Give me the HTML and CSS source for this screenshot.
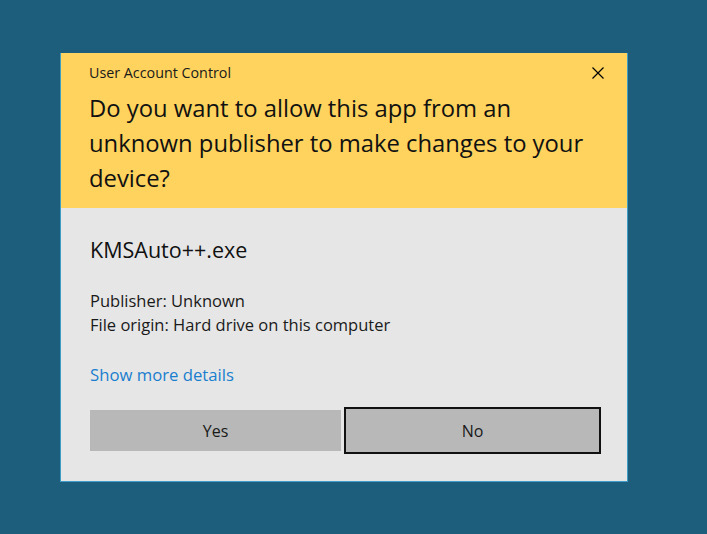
FILE: index.html
```html
<!DOCTYPE html>
<html lang="en">
<head>
<meta charset="utf-8">
<title>User Account Control</title>
<link rel="stylesheet" href="styles.css">
</head>
<body>
<div class="dialog">
  <div class="header">
    <div class="topbar">
      <div class="caption">User Account Control</div>
      <div class="close" aria-label="Close">
        <svg width="12" height="12" viewBox="0 0 12 12"><path d="M0.5 0.5 L11.5 11.5 M11.5 0.5 L0.5 11.5" stroke="#000" stroke-width="1.2" fill="none"/></svg>
      </div>
    </div>
    <div class="question">Do you want to allow this app from an unknown publisher to make changes to your device?</div>
  </div>
  <div class="content">
    <div class="appname">KMSAuto++.exe</div>
    <div class="info">
      <div>Publisher: Unknown</div>
      <div>File origin: Hard drive on this computer</div>
    </div>
    <div class="link">Show more details</div>
    <div class="buttons">
      <div class="btn">Yes</div>
      <div class="btn focused">No</div>
    </div>
  </div>
</div>
</body>
</html>
```

FILE: styles.css
```css
html, body {
  margin: 0;
  padding: 0;
}
body {
  background: #1d5e7d;
  width: 707px;
  height: 534px;
  overflow: hidden;
  font-family: "Open Sans", "Noto Sans", sans-serif;
  color: #000;
}
.dialog {
  margin-left: 60px;
  margin-top: 53px;
  width: 568px;
  box-sizing: border-box;
  border: 1px solid #3f9cc4;
  border-top: none;
  background: #e6e6e6;
}
.header {
  background: #ffd35d;
  padding: 10px 20px 12px 28px;
}
.topbar {
  display: flex;
  justify-content: space-between;
  align-items: center;
  height: 20px;
}
.caption {
  font-size: 14.3px;
  line-height: 20px;
  color: #1a1a1a;
}
.close {
  width: 12px;
  height: 12px;
  margin-right: 3px;
  display: flex;
}
.question {
  margin-top: 8px;
  font-size: 23.8px;
  line-height: 35px;
  width: 500px;
  color: #111;
}
.content {
  padding: 28px 29px 30px 29px;
}
.appname {
  font-size: 21.5px;
  line-height: 28px;
  color: #111;
}
.info {
  margin-top: 25px;
  font-size: 16.5px;
  line-height: 24px;
  color: #1a1a1a;
}
.link {
  margin-top: 26px;
  font-size: 16.7px;
  line-height: 24px;
  color: #1a7ecf;
}
.buttons {
  margin-top: 23px;
  display: grid;
  grid-template-columns: 1fr 1fr;
  gap: 6px;
}
.btn {
  height: 41px;
  background: #b8b8b8;
  display: flex;
  align-items: center;
  justify-content: center;
  font-size: 16px;
  color: #1a1a1a;
}
.btn.focused {
  box-shadow: 0 0 0 1px #b8b8b8, 0 0 0 3px #111;
}
```
